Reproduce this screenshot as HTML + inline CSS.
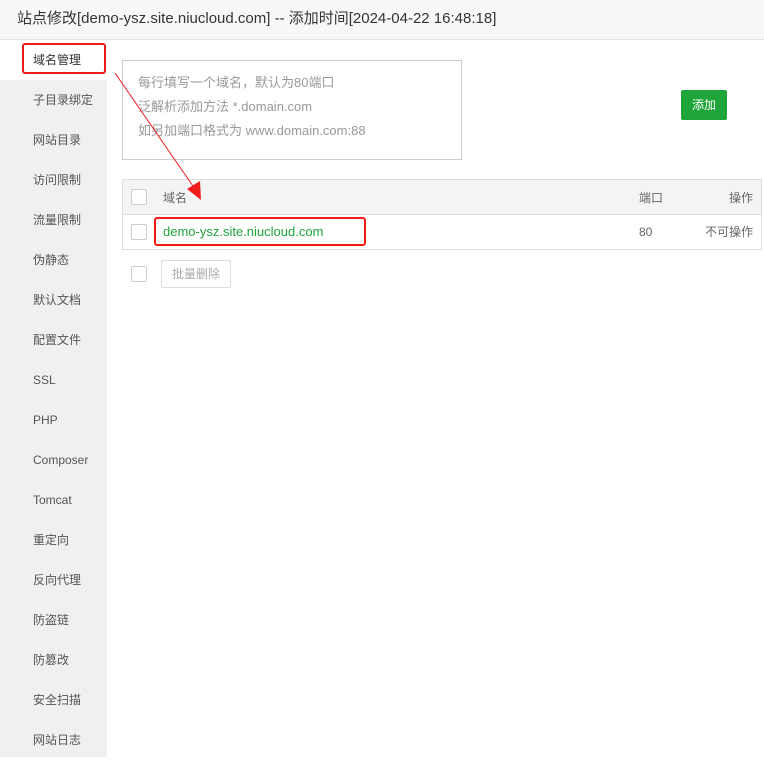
<!DOCTYPE html>
<html><head><meta charset="utf-8"><style>
*{margin:0;padding:0;box-sizing:border-box}
body{width:764px;height:757px;overflow:hidden;background:#fff;font-family:"Liberation Sans","Noto Sans CJK SC",sans-serif;font-size:12px;color:#333;position:relative}
.hdr{position:absolute;left:0;top:0;width:764px;height:40px;background:#f8f8f8;border-bottom:1px solid #e6e6e6;font-size:15px;line-height:38px;padding-left:17px;color:#333}
.side{position:absolute;left:0;top:40px;width:107px;height:717px;background:#f0f0f0}
.side div{height:40px;line-height:40px;padding-left:33px;color:#555;font-size:12px}
.side div.on{background:#fff;color:#333}
.ta{position:absolute;left:122px;top:60px;width:340px;height:100px;border:1px solid #ccc;padding:10px 0 0 15px;color:#999;line-height:24px;font-size:13px}
.btn{position:absolute;left:681px;top:90px;width:46px;height:30px;background:#20a53a;color:#fff;border-radius:2px;text-align:center;line-height:30px}
.tbl{position:absolute;left:122px;top:179px;width:640px;height:71px;border:1px solid #ddd}
.th{height:35px;background:#f4f4f4;border-bottom:1px solid #ddd;position:relative}
.tr{height:34px;position:relative}
.cb{position:absolute;width:16px;height:16px;border:1px solid #ccc;background:#fff;border-radius:2px}
.t{position:absolute;line-height:34px;color:#666}
.red{position:absolute;border:2px solid #f01c1c;border-radius:3px}
.bd{position:absolute;left:161px;top:260px;width:70px;height:28px;border:1px solid #ddd;color:#aaa;text-align:center;line-height:26px;border-radius:2px}
</style></head><body>
<div class="hdr">站点修改[demo-ysz.site.niucloud.com] -- 添加时间[2024-04-22 16:48:18]</div>
<div class="side">
<div class="on">域名管理</div><div>子目录绑定</div><div>网站目录</div><div>访问限制</div><div>流量限制</div><div>伪静态</div><div>默认文档</div><div>配置文件</div><div>SSL</div><div>PHP</div><div>Composer</div><div>Tomcat</div><div>重定向</div><div>反向代理</div><div>防盗链</div><div>防篡改</div><div>安全扫描</div><div>网站日志</div>
</div>
<div class="ta">每行填写一个域名，默认为80端口<br>泛解析添加方法 *.domain.com<br>如另加端口格式为 www.domain.com:88</div>
<div class="btn">添加</div>
<div class="tbl">
<div class="th"><div class="cb" style="left:8px;top:9px"></div><div class="t" style="left:40px;top:1px">域名</div><div class="t" style="left:516px;top:1px">端口</div><div class="t" style="right:8px;top:1px">操作</div></div>
<div class="tr"><div class="cb" style="left:8px;top:9px"></div><div class="t" style="left:40px;color:#20a53a;font-size:13px">demo-ysz.site.niucloud.com</div><div class="t" style="left:516px">80</div><div class="t" style="right:8px">不可操作</div></div>
</div>
<div class="cb" style="left:131px;top:266px"></div>
<div class="bd">批量删除</div>
<div class="red" style="left:22px;top:43px;width:84px;height:31px"></div>
<div class="red" style="left:154px;top:217px;width:212px;height:29px"></div>
<svg style="position:absolute;left:0;top:0" width="764" height="757"><line x1="115" y1="73" x2="195" y2="189" stroke="#f01c1c" stroke-width="1"/><polygon points="201,200 187,189 200,181" fill="#f01c1c"/></svg>
</body></html>
